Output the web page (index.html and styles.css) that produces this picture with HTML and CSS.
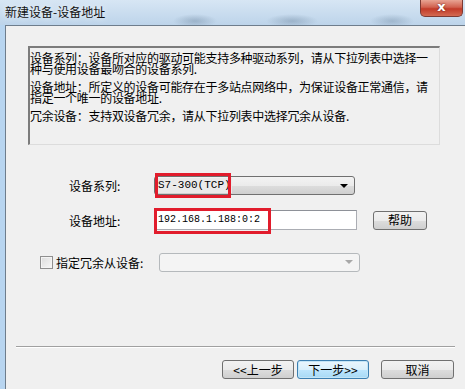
FILE: index.html
```html
<!DOCTYPE html>
<html lang="zh-CN">
<head>
  <meta charset="UTF-8" />
  <title>新建设备-设备地址</title>
  <link rel="stylesheet" href="styles.css">
</head>
<body>
  <div class="window">
    <div class="titlebar">
      <span class="title">新建设备-设备地址</span>
      <span class="close">x</span>
    </div>
    <div class="frame">
      <div class="client">
        <div class="desc">
          <p>设备系列：设备所对应的驱动可能支持多种驱动系列，请从下拉列表中选择一种与使用设备最吻合的设备系列.</p>
          <p>设备地址：所定义的设备可能存在于多站点网络中，为保证设备正常通信，请指定一个唯一的设备地址.</p>
          <p>冗余设备：支持双设备冗余，请从下拉列表中选择冗余从设备.</p>
        </div>

        <div class="row row-series">
          <label class="label">设备系列:</label>
          <div class="field">
            <div class="select">
              <span class="select-value">S7-300(TCP)</span>
              <span class="arrow"></span>
            </div>
            <span class="mark mark-series"></span>
          </div>
        </div>

        <div class="row row-addr">
          <label class="label">设备地址:</label>
          <div class="field">
            <div class="input">192.168.1.188:0:2</div>
            <span class="mark mark-addr"></span>
          </div>
          <button class="btn btn-help">帮助</button>
        </div>

        <div class="row row-backup">
          <span class="check"></span>
          <label class="check-label">指定冗余从设备:</label>
          <div class="select disabled">
            <span class="arrow"></span>
          </div>
        </div>

        <div class="footer">
          <div class="sep"></div>
          <div class="buttons">
            <button class="btn btn-prev">&lt;&lt;上一步</button>
            <button class="btn btn-next">下一步&gt;&gt;</button>
            <button class="btn btn-cancel">取消</button>
          </div>
        </div>
      </div>
    </div>
  </div>
</body>
</html>
```

FILE: styles.css
```css
html, body {
  margin: 0;
  padding: 0;
  width: 465px;
  height: 389px;
  overflow: hidden;
  font-family: "Noto Sans CJK SC", sans-serif;
  font-size: 12px;
  color: #000;
}
.window {
  width: 465px;
  height: 389px;
  display: flex;
  flex-direction: column;
  background: #c3d8ec;
}
.titlebar {
  height: 25px;
  flex: none;
  display: flex;
  align-items: flex-start;
  justify-content: space-between;
  background:
    radial-gradient(ellipse 22px 7px at 195px 21px, rgba(110, 135, 160, 0.45), transparent),
    radial-gradient(ellipse 26px 7px at 292px 21px, rgba(110, 135, 160, 0.45), transparent),
    radial-gradient(ellipse 22px 7px at 392px 21px, rgba(110, 135, 160, 0.4), transparent),
    linear-gradient(#d7e6f4, #bdd4ea);
}
.title {
  padding: 4px 0 0 5px;
  font-size: 12px;
  line-height: 16px;
  color: #111;
  text-shadow: 0 0 6px rgba(255, 255, 255, 0.9);
}
.close {
  width: 43px;
  height: 17px;
  margin-right: 2px;
  box-sizing: border-box;
  border: 1px solid #7d3a33;
  border-top: none;
  border-radius: 0 0 5px 5px;
  background: linear-gradient(#e8a493, #d1614f 45%, #c23a28 55%, #d36a52);
  color: #fff;
  font-family: "DejaVu Sans", sans-serif;
  font-weight: bold;
  font-size: 13px;
  line-height: 13px;
  text-align: center;
  text-shadow: 0 0 2px #5a1a10;
}
.frame {
  flex: 1;
  display: flex;
  padding-left: 5px;
  background: #b8d5f0;
}
.client {
  flex: 1;
  display: flex;
  flex-direction: column;
  background: #f0f0f0;
  border-top: 1px solid #6e7d8c;
  border-left: 1px solid #6e7d8c;
}

/* description box */
.desc {
  margin: 20px 0 0 22px;
  width: 409px;
  height: 92px;
  padding: 4px 0 0 0;
  border-top: 2px solid #7c7c7c;
  border-left: 2px solid #7c7c7c;
  border-right: 1px solid #dcdcdc;
  border-bottom: 1px solid #dcdcdc;
  line-height: 11px;
}
.desc p {
  margin: 0 0 7px 0;
  line-height: 11px;
  letter-spacing: -0.3px;
}

/* form rows */
.row {
  display: flex;
  align-items: center;
}
.row-series {
  margin-top: 31px;
  height: 19px;
}
.row-addr {
  margin-top: 15px;
  height: 20px;
}
.row-backup {
  margin-top: 22px;
  height: 20px;
}
.label {
  width: 85px;
  margin-left: 63px;
  font-size: 12px;
}
.field {
  position: relative;
}
.select {
  width: 201px;
  height: 19px;
  box-sizing: border-box;
  border: 1px solid #707070;
  border-radius: 3px;
  background: linear-gradient(#f3f3f3, #ebebeb 50%, #dddddd 51%, #cfcfcf);
  display: flex;
  align-items: center;
  justify-content: space-between;
  padding: 0 6px 0 2px;
}
.select-value {
  font-family: "Liberation Mono", monospace;
  font-size: 11px;
  background: #eaeaea;
  padding: 0 1px;
  line-height: 15px;
}
.arrow {
  width: 0;
  height: 0;
  margin-left: auto;
  border-left: 4px solid transparent;
  border-right: 4px solid transparent;
  border-top: 4px solid #000;
}
.input {
  width: 203px;
  height: 20px;
  box-sizing: border-box;
  border: 1px solid #abadb3;
  border-top-color: #8e9198;
  background: #fff;
  font-family: "Liberation Mono", monospace;
  font-size: 10px;
  line-height: 18px;
  padding-left: 3px;
}
.mark {
  position: absolute;
  border: 3px solid #e11c2c;
  box-sizing: border-box;
}
.mark-series {
  left: 1px;
  top: -3px;
  width: 76px;
  height: 25px;
}
.mark-addr {
  left: 0;
  top: -2px;
  width: 117px;
  height: 26px;
}

/* buttons */
.btn {
  font-family: "Noto Sans CJK SC", sans-serif;
  font-size: 12px;
  height: 19px;
  padding: 0;
  box-sizing: border-box;
  border: 1px solid #707070;
  border-radius: 3px;
  background: linear-gradient(#f2f2f2, #ebebeb 50%, #dddddd 51%, #cfcfcf);
  color: #000;
  line-height: 16px;
}
.btn-help {
  width: 54px;
  margin-left: 16px;
}

/* backup row */
.check {
  width: 13px;
  height: 13px;
  box-sizing: border-box;
  margin-left: 34px;
  border: 1px solid #8f8f8f;
  background: linear-gradient(135deg, #dcdcdc, #f8f8f8);
  box-shadow: inset 0 0 0 1px #f4f4f4;
}
.check-label {
  margin-left: 3px;
  width: 103px;
}
.select.disabled {
  border-color: #b5b9bc;
  background: #f4f4f4;
}
.select.disabled .arrow {
  border-top-color: #a8a8a8;
}

/* footer */
.footer {
  margin-top: auto;
  padding-bottom: 10px;
}
.sep {
  margin: 0 10px 0 10px;
  height: 1px;
  background: #a0a0a0;
  border-bottom: 1px solid #ffffff;
}
.buttons {
  display: flex;
  justify-content: flex-end;
  margin-top: 12px;
  padding-right: 11px;
}
.btn-prev {
  width: 72px;
}
.btn-next {
  width: 72px;
  margin-left: 3px;
  border-color: #3c7fb1;
  background: linear-gradient(#eaf6fd, #d9f0fc 50%, #bee6fd 51%, #a7d9f5);
  box-shadow: inset 0 0 0 1px #c4e5f6;
}
.btn-cancel {
  width: 73px;
  margin-left: 12px;
}
```
